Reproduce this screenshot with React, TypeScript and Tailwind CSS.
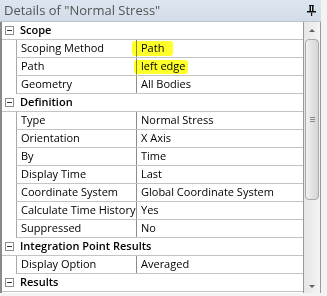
import React from 'react';

type Row =
  | { kind: 'group'; label: string }
  | { kind: 'prop'; label: string; value: string; mark?: 'path' | 'edge' };

const rows: Row[] = [
  { kind: 'group', label: 'Scope' },
  { kind: 'prop', label: 'Scoping Method', value: 'Path', mark: 'path' },
  { kind: 'prop', label: 'Path', value: 'left edge', mark: 'edge' },
  { kind: 'prop', label: 'Geometry', value: 'All Bodies' },
  { kind: 'group', label: 'Definition' },
  { kind: 'prop', label: 'Type', value: 'Normal Stress' },
  { kind: 'prop', label: 'Orientation', value: 'X Axis' },
  { kind: 'prop', label: 'By', value: 'Time' },
  { kind: 'prop', label: 'Display Time', value: 'Last' },
  { kind: 'prop', label: 'Coordinate System', value: 'Global Coordinate System' },
  { kind: 'prop', label: 'Calculate Time History', value: 'Yes' },
  { kind: 'prop', label: 'Suppressed', value: 'No' },
  { kind: 'group', label: 'Integration Point Results' },
  { kind: 'prop', label: 'Display Option', value: 'Averaged' },
  { kind: 'group', label: 'Results' },
];

function MinusBox() {
  return (
    <div className="w-[9px] h-[9px] border border-[#8c8c8c] bg-white flex items-center justify-center">
      <div className="w-[5px] h-px bg-[#333]" />
    </div>
  );
}

function Pin() {
  return (
    <svg width="9" height="11" viewBox="0 0 9 11">
      <rect x="2" y="0" width="5" height="1" fill="#111" />
      <rect x="2.5" y="1" width="1.5" height="5" fill="#111" />
      <rect x="5" y="1" width="1.5" height="5" fill="#111" />
      <rect x="0" y="6" width="9" height="1.5" fill="#111" />
      <rect x="4" y="7.5" width="1.2" height="3.5" fill="#111" />
    </svg>
  );
}

function Scrollbar() {
  return (
    <div className="w-[17px] flex flex-col bg-gradient-to-r from-[#e6e6e6] to-[#f4f4f4] border-l border-[#9a9a9a]">
      <div className="h-[17px] flex items-center justify-center">
        <div className="w-0 h-0 border-l-[3px] border-r-[3px] border-b-[3px] border-l-transparent border-r-transparent border-b-[#606060]" />
      </div>
      <div className="mx-px h-[161px] rounded-sm border border-[#a8a8a8] bg-gradient-to-r from-[#f2f2f2] via-[#e2e2e2] to-[#d6d6d6] flex items-center justify-center">
        <div className="flex flex-col gap-px">
          <div className="w-[5px] h-px bg-[#8a8a8a]" />
          <div className="w-[5px] h-px bg-[#8a8a8a]" />
          <div className="w-[5px] h-px bg-[#8a8a8a]" />
        </div>
      </div>
      <div className="flex-1" />
      <div className="h-[14px] flex items-center justify-center">
        <div className="w-0 h-0 border-l-[3px] border-r-[3px] border-t-[3px] border-l-transparent border-r-transparent border-t-[#606060]" />
      </div>
    </div>
  );
}

export default function App() {
  return (
    <div className="w-[327px] h-[296px] bg-[#f3f3f3] overflow-hidden text-black" style={{ fontFamily: '"Open Sans", "Noto Sans", sans-serif' }}>
      <div className="w-[321px] h-[293px] flex flex-col">
        <div className="h-[22px] flex items-center justify-between pl-[4px] pr-[5px] bg-gradient-to-b from-[#dce6f0] to-[#d2dde9] border-b border-[#b9c3cd]">
          <span className="text-[13px] text-[#555]">Details of "Normal Stress"</span>
          <Pin />
        </div>
        <div className="flex-1 flex bg-white border-l-2 border-[#8a8a8a] border-r border-r-[#9a9a9a]">
          <div className="flex-1 flex flex-col text-[11px]">
            {rows.map((r, i) =>
              r.kind === 'group' ? (
                <div key={i} className="h-[18px] flex items-center border-b border-[#c4c4c4]">
                  <div className="w-[14px] flex justify-center pl-[1px]">
                    <MinusBox />
                  </div>
                  <span className="pl-[4px] font-semibold">{r.label}</span>
                </div>
              ) : (
                <div key={i} className="h-[18px] flex">
                  <div className="w-[14px]" />
                  <div className="flex-1 flex border-l border-[#a8a8a8] border-b border-b-[#c4c4c4]">
                    <div className="w-[120px] pl-[4px] flex items-center border-r border-[#8c8c8c] whitespace-nowrap">{r.label}</div>
                    <div className="relative flex-1 pl-[4px] flex items-center whitespace-nowrap">
                      {r.mark === 'path' && (
                        <div className="absolute left-[-5px] top-[1px] w-[41px] h-[15px] rounded-[3px] bg-[#ffff2a] mix-blend-multiply" />
                      )}
                      {r.mark === 'edge' && (
                        <div className="absolute left-[-3px] top-[2px] w-[54px] h-[14px] rounded-[3px] bg-[#ffff2a] mix-blend-multiply" />
                      )}
                      <span className="relative">{r.value}</span>
                    </div>
                  </div>
                </div>
              )
            )}
          </div>
          <Scrollbar />
        </div>
      </div>
    </div>
  );
}
